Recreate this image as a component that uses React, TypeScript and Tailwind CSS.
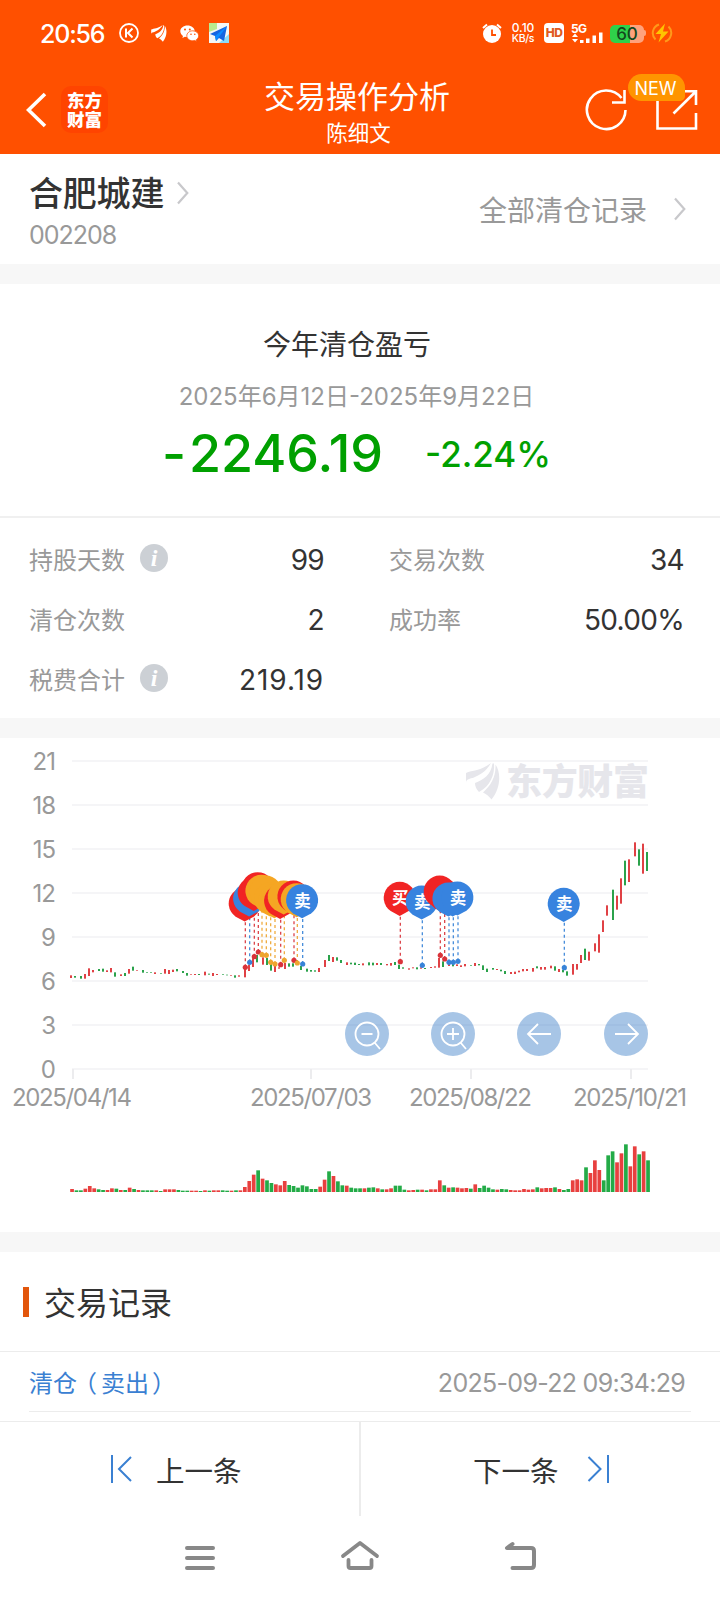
import { ReactNode } from 'react';
import clsx from 'clsx';

type Color = 'r' | 'g';

// [color, top, bottom, volume] for each trading day
const days: [Color, number, number, number][] = [
  ['r', 736, 744, 9], ['g', 738, 743, 5], ['g', 738, 746, 5], ['r', 732, 746, 10], ['r', 715, 738, 18],
  ['r', 720, 727, 11], ['g', 717, 723, 8], ['g', 716, 725, 6], ['r', 721, 726, 6], ['r', 714, 727, 11],
  ['g', 727, 740, 10], ['r', 733, 738, 6], ['g', 729, 738, 6], ['r', 717, 731, 13], ['g', 710, 722, 9],
  ['r', 721, 723, 6], ['g', 720, 728, 5], ['g', 726, 728, 5], ['g', 727, 729, 5], ['r', 727, 732, 5],
  ['g', 729, 731, 3], ['r', 717, 731, 8], ['r', 720, 732, 8], ['r', 719, 726, 8], ['g', 717, 724, 6],
  ['g', 723, 729, 4], ['g', 729, 737, 4], ['r', 733, 735, 4], ['r', 732, 735, 4], ['g', 732, 735, 3],
  ['r', 725, 736, 5], ['g', 731, 734, 4], ['r', 729, 738, 5], ['r', 732, 735, 5], ['g', 733, 735, 5],
  ['g', 734, 736, 4], ['r', 735, 737, 4], ['g', 736, 743, 5], ['r', 736, 740, 5], ['r', 716, 742, 15],
  ['r', 704, 723, 33], ['r', 685, 711, 52], ['g', 675, 697, 65], ['r', 682, 704, 40], ['g', 684, 705, 35],
  ['g', 702, 722, 27], ['r', 708, 726, 23], ['r', 712, 716, 20], ['r', 699, 717, 33], ['g', 700, 710, 21],
  ['g', 700, 710, 18], ['g', 690, 705, 13], ['g', 708, 720, 20], ['g', 716, 725, 17], ['g', 720, 725, 9],
  ['g', 721, 725, 9], ['r', 714, 726, 16], ['r', 690, 711, 37], ['g', 675, 693, 62], ['r', 681, 696, 48],
  ['g', 682, 692, 32], ['g', 690, 699, 20], ['r', 697, 705, 19], ['g', 698, 703, 13], ['g', 698, 705, 11],
  ['g', 702, 705, 11], ['r', 700, 706, 11], ['g', 697, 706, 13], ['g', 698, 706, 14], ['r', 699, 705, 11],
  ['g', 699, 705, 8], ['r', 702, 706, 8], ['r', 699, 707, 11], ['g', 696, 705, 19], ['g', 704, 717, 19],
  ['g', 712, 716, 7], ['r', 715, 719, 5], ['r', 712, 715, 6], ['g', 712, 718, 7], ['r', 712, 716, 7],
  ['g', 714, 717, 5], ['r', 711, 714, 8], ['r', 709, 713, 8], ['r', 684, 713, 35], ['g', 694, 711, 20],
  ['r', 700, 708, 13], ['g', 702, 709, 14], ['r', 703, 708, 13], ['r', 706, 711, 11], ['r', 702, 709, 12],
  ['g', 705, 707, 10], ['r', 699, 708, 23], ['g', 702, 706, 12], ['g', 706, 720, 19], ['g', 716, 726, 13],
  ['g', 714, 719, 8], ['r', 717, 720, 7], ['g', 719, 724, 9], ['g', 723, 732, 8], ['r', 726, 732, 6],
  ['r', 725, 732, 5], ['r', 722, 727, 5], ['r', 717, 724, 9], ['r', 717, 723, 7], ['r', 714, 725, 8],
  ['g', 709, 715, 14], ['r', 711, 719, 11], ['r', 711, 719, 12], ['r', 707, 715, 12], ['g', 709, 722, 14],
  ['r', 717, 726, 9], ['g', 720, 727, 6], ['g', 724, 737, 9], ['r', 702, 734, 35], ['r', 702, 719, 38],
  ['r', 675, 699, 35], ['g', 656, 690, 74], ['r', 665, 692, 57], ['r', 640, 664, 95], ['r', 613, 668, 66],
  ['r', 571, 606, 35], ['r', 526, 557, 110], ['g', 479, 570, 122], ['r', 497, 539, 89], ['r', 445, 521, 116],
  ['g', 392, 466, 143], ['r', 388, 456, 77], ['r', 337, 379, 137], ['g', 358, 407, 113], ['r', 341, 431, 122],
  ['g', 366, 423, 95],
];

// days whose volume bar differs in color from the candle
const volumeFlip: Record<number, Color> = { 120: 'g', 121: 'g' };

const fills = { r: '#e04145', g: '#2ba24b' };
const volumeFills = { r: '#e8403f', g: '#23ab47' };

const pinTypes = {
  buy: { color: '#f12424', dot: '#d9333a', label: '买' },
  sell: { color: '#3783df', dot: '#3783d8', label: '卖' },
  t: { color: '#f5a623', dot: '#eea52f', label: 'T' },
};

type PinData = { type: keyof typeof pinTypes; x: number; y: number; covered?: boolean };

const pins: PinData[] = [
  { type: 'buy', x: 245.3, y: 967.3, covered: true },
  { type: 'sell', x: 249.7, y: 962.3, covered: true },
  { type: 'buy', x: 254.3, y: 956.7, covered: true },
  { type: 'buy', x: 258.3, y: 952, covered: true },
  { type: 't', x: 262, y: 954.7, covered: true },
  { type: 't', x: 266.3, y: 955.3, covered: true },
  { type: 't', x: 270.7, y: 962.3, covered: true },
  { type: 't', x: 275, y: 964, covered: true },
  { type: 'buy', x: 280.7, y: 964.7, covered: true },
  { type: 't', x: 284.3, y: 960.3, covered: true },
  { type: 'buy', x: 294, y: 960.3, covered: true },
  { type: 't', x: 297.3, y: 963, covered: true },
  { type: 'sell', x: 302.7, y: 964 },
  { type: 'buy', x: 400.3, y: 961.7 },
  { type: 'sell', x: 422.3, y: 965.3 },
  { type: 'buy', x: 440.3, y: 955.3, covered: true },
  { type: 'buy', x: 444.7, y: 959, covered: true },
  { type: 'sell', x: 449, y: 962.3, covered: true },
  { type: 'sell', x: 453.3, y: 962.3, covered: true },
  { type: 'sell', x: 458, y: 961.3 },
  { type: 'sell', x: 564.3, y: 967.7 },
];

const yAxis = [21, 18, 15, 12, 9, 6, 3, 0];
const xAxis = [
  { x: 73, label: '2025/04/14', start: 12, width: 120 },
  { x: 311, label: '2025/07/03', start: 250, width: 122 },
  { x: 471, label: '2025/08/22', start: 409, width: 123 },
  { x: 631, label: '2025/10/21', start: 573, width: 114 },
];

function Chevron({ className }: { className?: string }) {
  return (
    <svg className={className} width="12" height="24" viewBox="0 0 12 24" fill="none" stroke="#c8c8cb" strokeWidth="2.2">
      <path d="M1 1.5 10.3 12 1 22.5" />
    </svg>
  );
}

function BirdLogo({ className, fill }: { className?: string; fill: string }) {
  return (
    <svg className={className} viewBox="0 0 34 37" fill={fill}>
      <path d="M0 10C6 7 15 8 25 0 20 9 13 12 8 14.500 4 16 0 15.500 0 20z" />
      <path d="M26.500.5C25 12 17 17 9 20c0 3 1 6 4 9C24 23 29 12 28 .5z" />
      <path d="M29.500 1.500C35 9 35 25 25.500 36.500 23 33 20 31 17 29.500 25 22 30 14 29.500 1.500z" />
    </svg>
  );
}

function InfoIcon() {
  return (
    <span className="mb-[4px] ml-[15px] flex h-7 w-7 items-center justify-center rounded-full bg-[#ccd0d5] font-['Liberation_Serif',serif] text-[24px] font-bold italic leading-none text-white">
      i
    </span>
  );
}

function StatusBar() {
  return (
    <div className="flex h-[66px] items-center pl-10 text-white">
      <span className="w-[66px] whitespace-nowrap pt-[2px] text-[25px] font-medium leading-none tracking-[-1.2px]">20:56</span>
      <svg className="ml-[13px]" width="20" height="20" viewBox="0 0 20 20" fill="none" stroke="#fff" strokeWidth="1.8">
        <circle cx="10" cy="10" r="9" />
        <path d="M7 5.5v9M13.5 5.5 9 10l4.500 4.500" strokeWidth="2" />
      </svg>
      <BirdLogo className="ml-[12px] h-[17px] w-[16px]" fill="#fff" />
      <svg className="ml-[13px]" width="19" height="17" viewBox="0 0 19 17">
        <path d="M7.500.5C3.400.5.300 3 .300 6.300c0 1.900 1 3.500 2.700 4.600l-.6 2.200 2.500-1.300c.8.2 1.600.4 2.600.4 4 0 7.200-2.600 7.200-5.900S11.500.5 7.500.5z" fill="#fff" />
        <path d="M12.800 5.800c-3.300 0-6 2.200-6 5s2.700 5 6 5c.7 0 1.400-.1 2-.3l2 1-.5-1.800c1.500-.9 2.400-2.300 2.400-3.900 0-2.800-2.600-5-5.900-5z" fill="#fff" stroke="#ff5000" strokeWidth=".8" />
        <g fill="#ff5000">
          <circle cx="5" cy="4.500" r="1" />
          <circle cx="9.800" cy="4.500" r="1" />
          <circle cx="11" cy="9.300" r=".8" />
          <circle cx="14.800" cy="9.300" r=".8" />
        </g>
      </svg>
      <svg className="ml-[10px]" width="20" height="20" viewBox="0 0 20 20">
        <path d="M0 0h20v20H0z" fill="#f4f7f5" />
        <path d="M0 0h8v6L0 9z" fill="#b9ec8e" />
        <path d="M10 20l10-9v9z" fill="#8bdcf8" />
        <path d="M18 3 1 11l5 2 1 5 3-3 5 3z" fill="#1565e0" />
        <path d="M18 3 6 13l1 5z" fill="#0b8cff" />
      </svg>

      <svg className="ml-[253px]" width="20" height="20" viewBox="0 0 20 20">
        <circle cx="10" cy="11" r="9" fill="#fff" />
        <path d="M1 5 5 1.500M19 5l-4-3.500" stroke="#fff" strokeWidth="2" />
        <path d="M10 6.500V12h4" stroke="#ff5000" strokeWidth="1.800" fill="none" />
      </svg>
      <div className="ml-2 w-[26px] whitespace-nowrap text-center text-[12px] font-medium leading-[11px]">
        <div>0.10</div>
        <div className="text-[10.500px] tracking-[-.3px]">KB/s</div>
      </div>
      <span className="ml-2 flex h-5 w-5 items-center justify-center rounded-[4px] bg-white text-[12px] font-extrabold tracking-[-.5px] text-[#e05a20]">
        HD
      </span>
      <svg className="ml-[7px] overflow-visible" width="33" height="22" viewBox="0 0 33 22" fill="#fff">
        <text x="0" y="10.500" fontSize="12" fontWeight="700" fontFamily="Inter, sans-serif" textLength="16">5G</text>
        <path d="M1 15l3-3.500L7 15zM1 17l3 3.500L7 17z" />
        <path d="M9 18h3.500v3H9zM15 16.500h3.500V21H15zM21.500 13.500H25V21h-3.500zM28 10.500h3.500V21H28z" />
      </svg>
      <div className="ml-[6px] mt-[2px] flex h-[18px] w-[34px] items-center justify-center rounded-[5px] bg-[linear-gradient(90deg,#2fd14a_60%,#ffa27c_60%)] text-[17px] font-medium leading-none text-[#14471d]">
        60
      </div>
      <span className="h-[6px] w-[2px] rounded-r bg-[#ffa27c]" />
      <svg className="ml-[5px]" width="22" height="22" viewBox="0 0 22 22">
        <path d="M8 2.500a9 9 0 0 0-3.500 15M14 19.500a9 9 0 0 0 3.500-15" stroke="#ff9a1a" strokeWidth="2" fill="none" />
        <path d="M14 1.500 4.500 12H10l-2.500 8.500L17.500 9.500H12z" fill="#ffc400" />
      </svg>
    </div>
  );
}

function Header() {
  return (
    <header className="h-[154px] bg-[#ff5000] text-white">
      <StatusBar />
      <div className="relative flex h-[88px] items-start">
        <svg className="ml-[26px] mt-[26px]" width="21" height="36" viewBox="0 0 21 36" fill="none" stroke="#fff" strokeWidth="3.600">
          <path d="M19 2 2.500 18 19 34" />
        </svg>
        <div className="ml-[14px] mt-[20px] flex h-[47px] w-[47px] flex-col items-center justify-center rounded-[10px] bg-[#ff4400] pt-px text-[17.500px] font-black leading-[19.500px]">
          <span>东方</span>
          <span>财富</span>
        </div>
        <div className="ml-[120px] flex w-[258px] flex-col items-center">
          <h1 className="mt-[15px] text-[31px] leading-[32px]">交易操作分析</h1>
          <p className="ml-[3px] mt-[9px] text-[21.500px] leading-[22px]">陈细文</p>
        </div>
        <svg className="ml-[98px] mt-[22px]" width="44" height="44" viewBox="0 0 44 44" fill="none" stroke="#fff" strokeWidth="2.600">
          <path d="M41.500 22A19.300 19.300 0 1 1 37.500 10" />
          <path d="M40.500 2v12.500H28" />
        </svg>
        <svg className="ml-[27px] mt-[22px]" width="44" height="44" viewBox="0 0 44 44" fill="none" stroke="#fff" strokeWidth="2.600">
          <path d="M2.500 8v32.500h38.500V25" />
          <path d="M28 3.300h13V17M41 3.300 18.500 25.500" />
        </svg>
        <span className="absolute left-[628px] top-[8px] flex h-[27px] w-[57px] items-center justify-center rounded-t-[14px] rounded-bl-[14px] rounded-br-[5px] bg-[#ff9500] pr-[2px] pt-[2px] text-[18px] leading-none">
          NEW
        </span>
      </div>
    </header>
  );
}

function StockRow() {
  return (
    <section className="flex h-[110px] justify-between pl-[29px] pr-[34px]">
      <div>
        <div className="mt-[21px] flex items-center">
          <h2 className="pt-[2px] text-[34px] font-medium leading-[34px] tracking-[-.2px] text-[#333]">合肥城建</h2>
          <Chevron className="ml-[13px]" />
        </div>
        <p className="mt-[12px] text-[25px] leading-[25px] tracking-[-1px] text-[#999]">002208</p>
      </div>
      <div className="flex items-center text-[28px] leading-none text-[#999]">
        <span className="pt-[4px]">全部清仓记录</span>
        <Chevron className="ml-[27px]" />
      </div>
    </section>
  );
}

function Summary() {
  return (
    <section className="flex h-[234px] flex-col items-center border-b-2 border-[#f0f0f0] pr-[7px]">
      <h3 className="mr-[19px] mt-[47px] text-[28px] leading-[28px] text-[#333]">今年清仓盈亏</h3>
      <p className="mt-[26px] whitespace-nowrap text-[24px] leading-[24px] text-[#999]">
        2025年6月12日-2025年9月22日
      </p>
      <div className="mt-[19px] flex h-[52px] items-center text-[#00a000]">
        <span className="text-[52px] font-medium leading-none">
          <span className="mr-[3px]">-</span>2246.19
        </span>
        <span className="ml-[42px] text-[35px] font-medium leading-none">-2.24%</span>
      </div>
    </section>
  );
}

function Stat({ label, value, info, wide }: { label: string; value: string; info?: boolean; wide?: boolean }) {
  return (
    <div className="flex h-[60px] items-center">
      <span className="pt-px text-[24px] leading-none text-[#999]">{label}</span>
      {info && <InfoIcon />}
      <span className={clsx('ml-auto text-[28px] leading-none text-[#333]', wide ? 'tracking-[.9px]' : 'tracking-[-.7px]')}>
        {value}
      </span>
    </div>
  );
}

function Stats() {
  return (
    <section className="grid h-[200px] grid-cols-[295px_295px] content-start gap-x-[65px] pl-[29px] pt-[12px]">
      <Stat label="持股天数" value="99" info />
      <Stat label="交易次数" value="34" />
      <Stat label="清仓次数" value="2" />
      <Stat label="成功率" value="50.00%" />
      <Stat label="税费合计" value="219.19" info wide />
    </section>
  );
}

function Pin({ type, x, y, covered }: PinData) {
  const { color, label } = pinTypes[type];
  const cx = x - 0.6;
  const cy = y - 63.8;
  return (
    <g>
      <path d={`M${cx} ${cy + 18}L${cx - 9} ${cy + 13.2}A16 16 0 1 1 ${cx + 9} ${cy + 13.2}Z`} fill={color} />
      {!covered && (
        <text x={cx + 0.5} y={cy + 6.5} fontSize="16.500" fontWeight="700" textAnchor="middle" fill="#fff">
          {label}
        </text>
      )}
    </g>
  );
}

function RoundButton({ children }: { children: ReactNode }) {
  return (
    <button className="h-11 w-11 rounded-full bg-[#3b7fc8]/45 last:ml-px">
      <svg width="44" height="44" viewBox="0 0 44 44" fill="none" stroke="#fff" strokeWidth="1.800">
        {children}
      </svg>
    </button>
  );
}

function Chart() {
  const pitch = 576 / 130;

  return (
    <section className="relative h-[494px]">
      <svg
        className="block font-[Inter,'Noto_Sans_CJK_SC',sans-serif]"
        width="720"
        height="494"
        viewBox="0 738 720 494"
      >
        {yAxis.map((value, i) => (
          <g key={value}>
            <path d={`M72 ${761 + i * 44}H648`} stroke="#f5f5f7" strokeWidth="2" />
            <text x="55" y={769.5 + i * 44} fontSize="24" letterSpacing="-1" textAnchor="end" fill="#999">
              {value}
            </text>
          </g>
        ))}
        {xAxis.map(({ x, label, start, width }) => (
          <g key={label}>
            <path d={`M${x} 1069v10`} stroke="#ececee" strokeWidth="2" />
            <text x={start} y="1105.500" fontSize="24" textLength={width} fill="#999">
              {label}
            </text>
          </g>
        ))}

        <svg x="466" y="763" width="34" height="37">
          <BirdLogo fill="#e6e6eb" />
        </svg>
        <text x="506" y="795" fontSize="36" fontWeight="900" textLength="143" fill="#e6e6eb">
          东方财富
        </text>

        {days.map(([color, top, bottom], i) => (
          <rect
            key={i}
            x={70 + 2 * Math.floor((i * pitch + 1.5) / 2)}
            y={730 + top / 3}
            width="2"
            height={(bottom - top) / 3}
            fill={fills[color]}
          />
        ))}
        {days.map(([color, , , volume], i) => (
          <rect
            key={i}
            x={70.2 + i * pitch}
            y={1192 - volume / 3}
            width="3.700"
            height={volume / 3}
            fill={volumeFills[volumeFlip[i] ?? color]}
          />
        ))}

        {pins.map(({ type, x, y }, i) => (
          <g key={i}>
            <path d={`M${x} ${y - 45}V${y}`} stroke={pinTypes[type].dot} strokeWidth="1.200" strokeDasharray="3 3" />
            <circle cx={x} cy={y} r="2.600" fill={pinTypes[type].dot} />
          </g>
        ))}
        {pins.map((pin, i) => (
          <Pin key={i} {...pin} />
        ))}
      </svg>

      <div className="absolute left-[345px] top-[274px] flex gap-[42px]">
        <RoundButton>
          <circle cx="22" cy="22" r="11.500" />
          <path d="M16.500 22h11M29.500 30.500l5.500 6.500" />
        </RoundButton>
        <RoundButton>
          <circle cx="22" cy="22" r="11.500" />
          <path d="M16 22h12M22 16v12M29.500 30.500l5.500 6.500" />
        </RoundButton>
        <RoundButton>
          <path d="M34 22H11M21 12 11 22l10 10" />
        </RoundButton>
        <RoundButton>
          <path d="M11 22h23M24 12l10 10-10 10" />
        </RoundButton>
      </div>
    </section>
  );
}

function Records() {
  return (
    <section className="h-[169px]">
      <div className="flex h-[100px] items-center border-b border-[#ececec] pl-[23px]">
        <span className="h-[30px] w-[6px] bg-[#e2560c]" />
        <h3 className="ml-[15px] pt-[4px] text-[32px] leading-none text-[#333]">交易记录</h3>
      </div>
      <div className="ml-[29px] mr-[29px] flex h-[60px] items-center justify-between border-b border-[#ececec] pr-[6px] pt-[3px]">
        <span className="pt-px text-[24px] leading-none text-[#3a80d2]">
          清仓
          <span className="-ml-1 mr-1">（</span>
          卖出
          <span className="ml-[3px]">）</span>
        </span>
        <span className="text-[25px] leading-none tracking-[-.7px] text-[#999]">2025-09-22 09:34:29</span>
      </div>
    </section>
  );
}

function Pager() {
  return (
    <div className="grid h-[95px] grid-cols-[361px_1fr] border-t border-[#ececec] text-[28.500px] leading-none text-[#333]">
      <button className="flex items-center border-r-2 border-[#ececec] pl-[110px]">
        <svg width="23" height="28" viewBox="0 0 23 28" fill="none" stroke="#3a80d2" strokeWidth="2">
          <path d="M2 0v28M21 2 9 14l12 12" />
        </svg>
        <span className="ml-[23px] pt-[6px]">上一条</span>
      </button>
      <button className="flex items-center pl-[112px]">
        <span className="pt-[6px]">下一条</span>
        <svg className="ml-[28px]" width="23" height="28" viewBox="0 0 23 28" fill="none" stroke="#3a80d2" strokeWidth="2">
          <path d="M21 0v28M1.500 2l12 12-12 12" />
        </svg>
      </button>
    </div>
  );
}

function NavBar() {
  return (
    <nav className="flex h-[84px] justify-center gap-[120px] pt-[22px]">
      <svg width="40" height="40" viewBox="0 0 40 40" stroke="#888" strokeWidth="4" strokeLinecap="round">
        <path d="M7 10h26M7 20h26M7 30h26" />
      </svg>
      <svg width="40" height="40" viewBox="0 0 40 40" fill="none" stroke="#888" strokeWidth="3.800" strokeLinecap="round" strokeLinejoin="round">
        <path d="M3 18 20 5l17 13M8.500 22v6q0 2 2 2h19q2 0 2-2v-6" />
      </svg>
      <svg width="40" height="40" viewBox="0 0 40 40" fill="none" stroke="#888" strokeWidth="4" strokeLinecap="round" strokeLinejoin="round">
        <path d="M12.500 6 7 10h24q3 0 3 3v14q0 3-3 3H12.500" />
      </svg>
    </nav>
  );
}

function Divider() {
  return <div className="h-5 bg-[#f7f7f7]" />;
}

export default function App() {
  return (
    <div className="h-[1600px] w-[720px] overflow-hidden bg-white font-[Inter,'Noto_Sans_CJK_SC',sans-serif]">
      <Header />
      <StockRow />
      <Divider />
      <Summary />
      <Stats />
      <Divider />
      <Chart />
      <Divider />
      <Records />
      <Pager />
      <NavBar />
    </div>
  );
}
